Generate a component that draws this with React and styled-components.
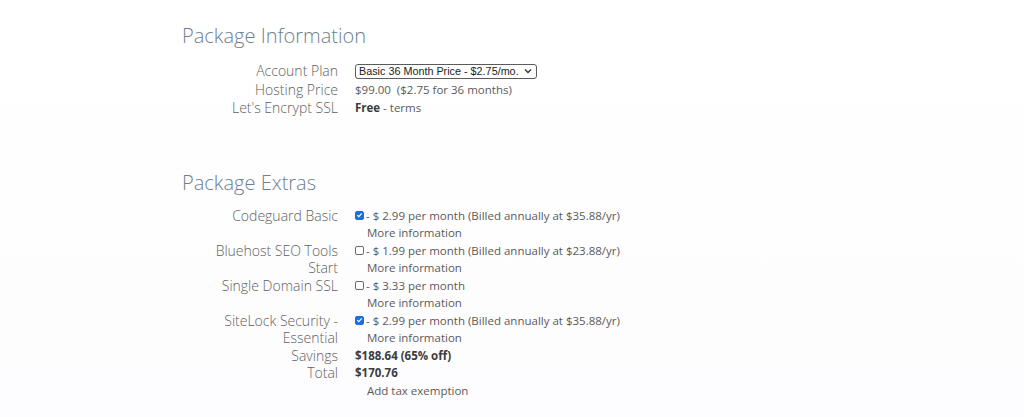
import React from 'react'
import styled, { createGlobalStyle } from 'styled-components'

const GlobalStyle = createGlobalStyle`
  html, body {
    margin: 0;
    padding: 0;
    background: linear-gradient(180deg, #ffffff 0%, #fefefe 50%, #fdfcfe 100%);
    min-height: 100%;
  }
  body {
    font-family: "Open Sans", "Noto Sans", sans-serif;
  }
`;

const extras = [
  { label: ['Codeguard Basic'], checked: true, price: '2.99', billed: '35.88' },
  { label: ['Bluehost SEO Tools', 'Start'], checked: false, price: '1.99', billed: '23.88' },
  { label: ['Single Domain SSL'], checked: false, price: '3.33' },
  { label: ['SiteLock Security -', 'Essential'], checked: true, price: '2.99', billed: '35.88' },
];

const Checkbox = ({ checked }) => (
  <Box $checked={checked}>
    {checked && (
      <svg width="8" height="8" viewBox="0 0 8 8">
        <path d="M1.4 4.1 L3.2 5.9 L6.6 2.2" fill="none" stroke="#fff" strokeWidth="1.4" />
      </svg>
    )}
  </Box>
);

const App = () => {
  return (
    <Page>
      <GlobalStyle />
      <Section>
        <Heading>Package Information</Heading>
        <Grid>
          <Label $tall>Account Plan</Label>
          <Value $tall>
            <Select>
              <span>Basic 36 Month Price - $2.75/mo.</span>
              <svg width="8" height="6" viewBox="0 0 8 6">
                <path d="M1 1.5 L4 4.5 L7 1.5" fill="none" stroke="#333" strokeWidth="1.3" />
              </svg>
            </Select>
          </Value>
          <Label>Hosting Price</Label>
          <Value>$99.00&nbsp;&nbsp;($2.75 for 36 months)</Value>
          <Label>Let's Encrypt SSL</Label>
          <Value><Strong>Free</Strong> - terms</Value>
        </Grid>
      </Section>

      <Section $extras>
        <Heading $tight>Package Extras</Heading>
        <Grid>
          {extras.map((item) => (
            <React.Fragment key={item.label.join(' ')}>
              <Label>
                {item.label.map((line) => (
                  <div key={line}>{line}</div>
                ))}
              </Label>
              <Value>
                <OptionLine>
                  <Checkbox checked={item.checked} />
                  <span>
                    {' '}- $ {item.price} per month
                    {item.billed && ` (Billed annually at $${item.billed}/yr)`}
                  </span>
                </OptionLine>
                <Indented>More information</Indented>
              </Value>
            </React.Fragment>
          ))}
          <Label>Savings</Label>
          <Value><Strong>$188.64 (65% off)</Strong></Value>
          <Label>Total</Label>
          <Value><Strong>$170.76</Strong></Value>
          <Label />
          <Value><Indented>Add tax exemption</Indented></Value>
        </Grid>
      </Section>
    </Page>
  )
}

export default App;

const Page = styled.div`
  width: 1024px;
  height: 417px;
  padding: 22px 0 0 182px;
  box-sizing: border-box;
  overflow: hidden;
`;

const Section = styled.section`
  margin-top: ${(p) => (p.$extras ? '53px' : '0')};
`;

const Heading = styled.h2`
  margin: 0 0 ${(p) => (p.$tight ? '9.5px' : '11px')};
  font-size: 20px;
  font-weight: 300;
  line-height: 28px;
  color: #6e7f91;
`;

const Grid = styled.div`
  display: grid;
  grid-template-columns: 156px auto;
  column-gap: 17px;
  align-items: start;
`;

const Label = styled.div`
  text-align: right;
  font-size: 14px;
  font-weight: 300;
  line-height: 17.5px;
  color: #5e5e5e;
  ${(p) => p.$tall && 'line-height: 20px;'}
`;

const Value = styled.div`
  font-size: 11.5px;
  line-height: 17.5px;
  color: #5a5a5a;
  white-space: nowrap;
  ${(p) => p.$tall && 'height: 20px; display: flex; align-items: center;'}
`;

const Select = styled.div`
  display: inline-flex;
  align-items: center;
  gap: 5px;
  height: 15px;
  box-sizing: border-box;
  padding: 0 4px 0 3px;
  border: 1px solid #5b5b5b;
  border-radius: 3px;
  background: #fff;
  font-family: "Liberation Sans", Arial, sans-serif;
  font-size: 10.8px;
  line-height: 13px;
  color: #222;
`;

const Strong = styled.b`
  font-weight: 700;
  color: #3c3c3c;
`;

const OptionLine = styled.div`
  display: flex;
  align-items: center;
  gap: 2px;
`;

const Box = styled.span`
  display: inline-flex;
  align-items: center;
  justify-content: center;
  width: 9px;
  height: 9px;
  box-sizing: border-box;
  border-radius: 2px;
  border: 1px solid ${(p) => (p.$checked ? '#1a6fd8' : '#6a6a6a')};
  background: ${(p) => (p.$checked ? '#1a6fd8' : '#fff')};
`;

const Indented = styled.div`
  padding-left: 12px;
`;
